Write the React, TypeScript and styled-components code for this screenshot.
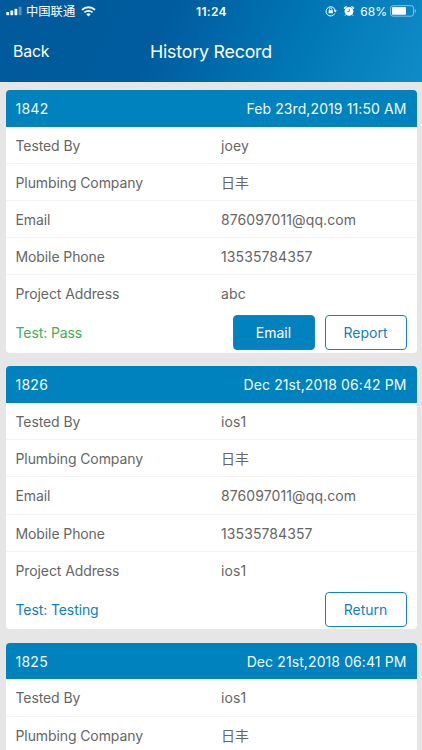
import React from 'react';
import styled, { createGlobalStyle } from 'styled-components';

const GlobalStyle = createGlobalStyle`
  * { box-sizing: border-box; }
  body {
    margin: 0;
    background: #e6e6e6;
    font-family: Inter, "Noto Sans CJK SC", sans-serif;
    -webkit-font-smoothing: antialiased;
  }
`;

const Screen = styled.div`
  width: 422px;
  height: 750px;
  overflow: hidden;
  background: #e6e6e6;
`;

const TopArea = styled.header`
  height: 81.5px;
  color: #fff;
  background: linear-gradient(115deg, #005a9b 0%, #005c9f 38%, #0076b4 68%, #0f8cc7 100%);
`;

const StatusBar = styled.div`
  display: grid;
  grid-template-columns: 1fr auto 1fr;
  align-items: center;
  height: 22px;
  padding: 0 5px 0 6px;
`;

const StatusGroup = styled.div<{ $end?: boolean }>`
  display: flex;
  align-items: center;
  justify-content: ${p => (p.$end ? 'flex-end' : 'flex-start')};
  svg { display: block; flex: none; }
`;

const Carrier = styled.span`
  margin: 0 6px 0 4px;
  font: 12.3px/22px "Noto Sans CJK SC", sans-serif;
`;

const Clock = styled.span`
  font-size: 12px;
  font-weight: 600;
  letter-spacing: 0.3px;
`;

const Percent = styled.span`
  margin: 0 3px 0 5px;
  font-size: 12px;
`;

const NavBar = styled.nav`
  display: grid;
  grid-template-columns: 1fr auto 1fr;
  align-items: center;
  height: 59px;
  padding: 0 13px;
`;

const BackLink = styled.span`
  font-size: 15.8px;
  letter-spacing: -0.15px;
`;

const Title = styled.h1`
  margin: 0;
  font-size: 17.8px;
  font-weight: 400;
  letter-spacing: -0.2px;
`;

const List = styled.main`
  display: flex;
  flex-direction: column;
  gap: 13.5px;
  padding: 8.5px 5.5px 0;
`;

const Card = styled.section`
  flex: none;
  border-radius: 4px;
  overflow: hidden;
  background: #fff;
`;

const CardHeader = styled.div`
  display: flex;
  align-items: center;
  justify-content: space-between;
  height: 36.5px;
  padding: 0 10px;
  background: #0082be;
  color: #f2faff;
  font-size: 14px;
  letter-spacing: 0.1px;
`;

const RecordId = styled.span`
  letter-spacing: 0.25px;
`;

const RecordDate = styled.span``;

const Row = styled.div`
  display: grid;
  grid-template-columns: 205.5px 1fr;
  align-items: center;
  height: 37.2px;
  padding: 2px 10px 0;
  border-bottom: 1px solid #f3f3f3;
  color: #666;
  font-size: 14px;
  line-height: 18px;
  &:nth-child(6) { border-bottom: 0; padding-top: 1px; }
`;

const Label = styled.span`
  letter-spacing: -0.1px;
`;

const Value = styled.span`
  letter-spacing: 0.1px;
`;

const Footer = styled.div`
  display: flex;
  align-items: center;
  gap: 10px;
  height: 40.5px;
  padding: 0 10px;
`;

const Status = styled.span<{ $pass: boolean }>`
  flex: 1;
  color: ${p => (p.$pass ? '#3fae52' : '#0d80bd')};
  font-size: 14px;
  letter-spacing: -0.1px;
`;

const Button = styled.button<{ $filled?: boolean }>`
  width: 82px;
  height: 35px;
  padding: 0;
  border: 1px solid #1783be;
  border-radius: 4px;
  background: ${p => (p.$filled ? '#0082be' : '#fff')};
  color: ${p => (p.$filled ? '#fff' : '#1580bc')};
  font-family: inherit;
  font-size: 14px;
`;

const Signal = () => (
  <svg width="16" height="10" viewBox="0 0 16 10" fill="#fff">
    <rect x="0.3" y="6" width="2.8" height="3.2" rx=".6" />
    <rect x="4.4" y="4.5" width="2.8" height="4.7" rx=".6" />
    <rect x="8.5" y="2.8" width="2.8" height="6.4" rx=".6" />
    <rect x="12.7" y=".7" width="2.8" height="8.5" rx=".6" opacity=".35" />
  </svg>
);

const Wifi = () => (
  <svg width="15" height="11" viewBox="0 0 15 11" fill="none" stroke="#fff">
    <path d="M1 3.9a9.4 9.4 0 0 1 13 0" strokeWidth="1.9" />
    <path d="M3.4 6.4a6 6 0 0 1 8.2 0" strokeWidth="1.8" />
    <path d="M7.5 10.5 5.3 8.2a3.2 3.2 0 0 1 4.4 0Z" fill="#fff" stroke="none" />
  </svg>
);

const RotationLock = () => (
  <svg width="12" height="12" viewBox="0 0 12 12" fill="none" stroke="#fff">
    <path d="M9.7 8.6A4.6 4.6 0 1 1 10.2 5.6" strokeWidth="1" />
    <path d="M8.6 5.3h3.2l-1.6 2.2Z" fill="#fff" stroke="none" />
    <rect x="3.6" y="5.2" width="4.2" height="3.1" rx=".4" fill="#fff" stroke="none" />
    <path d="M4.5 5.4V4.3a1.2 1.2 0 0 1 2.4 0v1.1" strokeWidth=".8" />
  </svg>
);

const Alarm = () => (
  <svg width="12" height="12" viewBox="0 0 12 12" fill="none" stroke="#fff">
    <circle cx="6" cy="6.3" r="4.4" fill="#fff" stroke="none" />
    <path d="M1.5 3.1 3.1 1.7M10.5 3.1 8.9 1.7" strokeWidth="1.5" strokeLinecap="round" />
    <path d="m2.8 9.5-.8 1.1M9.2 9.5l.8 1.1" strokeWidth="1" />
    <path d="M6.3 3.9v2.6H4.4" stroke="#0874b3" strokeWidth=".8" />
  </svg>
);

const Battery = () => (
  <svg width="27" height="12" viewBox="0 0 27 12">
    <rect x=".6" y=".7" width="23" height="10.5" rx="2.4" fill="none" stroke="#fff" strokeOpacity=".5" />
    <rect x="2" y="2.1" width="14" height="7.7" rx=".8" fill="#fff" />
    <path d="M24.8 4.1a2.1 2.1 0 0 1 0 3.8Z" fill="#fff" opacity=".5" />
  </svg>
);

const IconGap = styled.span`
  width: 6px;
`;

interface HistoryRecord {
  id: string;
  date: string;
  fields: [string, string][];
  status?: string;
  actions?: string[];
}

const records: HistoryRecord[] = [
  {
    id: '1842',
    date: 'Feb 23rd,2019 11:50 AM',
    fields: [
      ['Tested By', 'joey'],
      ['Plumbing Company', '日丰'],
      ['Email', '876097011@qq.com'],
      ['Mobile Phone', '13535784357'],
      ['Project Address', 'abc'],
    ],
    status: 'Pass',
    actions: ['Email', 'Report'],
  },
  {
    id: '1826',
    date: 'Dec 21st,2018 06:42 PM',
    fields: [
      ['Tested By', 'ios1'],
      ['Plumbing Company', '日丰'],
      ['Email', '876097011@qq.com'],
      ['Mobile Phone', '13535784357'],
      ['Project Address', 'ios1'],
    ],
    status: 'Testing',
    actions: ['Return'],
  },
  {
    id: '1825',
    date: 'Dec 21st,2018 06:41 PM',
    fields: [
      ['Tested By', 'ios1'],
      ['Plumbing Company', '日丰'],
    ],
  },
];

function RecordCard({ record }: { record: HistoryRecord }) {
  return (
    <Card>
      <CardHeader>
        <RecordId>{record.id}</RecordId>
        <RecordDate>{record.date}</RecordDate>
      </CardHeader>
      {record.fields.map(([label, value]) => (
        <Row key={label}>
          <Label>{label}</Label>
          <Value>{value}</Value>
        </Row>
      ))}
      {record.status && (
        <Footer>
          <Status $pass={record.status === 'Pass'}>Test: {record.status}</Status>
          {record.actions?.map(action => (
            <Button key={action} $filled={action === 'Email'}>{action}</Button>
          ))}
        </Footer>
      )}
    </Card>
  );
}

export default function App() {
  return (
    <Screen>
      <GlobalStyle />
      <TopArea>
        <StatusBar>
          <StatusGroup>
            <Signal />
            <Carrier>中国联通</Carrier>
            <Wifi />
          </StatusGroup>
          <Clock>11:24</Clock>
          <StatusGroup $end>
            <RotationLock />
            <IconGap />
            <Alarm />
            <Percent>68%</Percent>
            <Battery />
          </StatusGroup>
        </StatusBar>
        <NavBar>
          <BackLink>Back</BackLink>
          <Title>History Record</Title>
        </NavBar>
      </TopArea>
      <List>
        {records.map(record => <RecordCard key={record.id} record={record} />)}
      </List>
    </Screen>
  );
}
